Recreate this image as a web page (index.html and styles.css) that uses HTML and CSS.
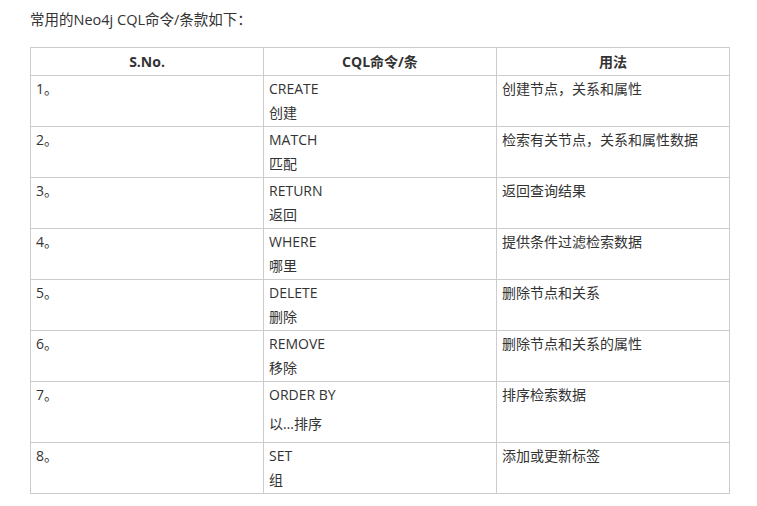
FILE: index.html
```html
<!DOCTYPE html>
<html lang="zh">
<head>
<meta charset="utf-8">
<link rel="stylesheet" href="styles.css">
</head>
<body>
<p class="intro">常用的Neo4j CQL命令/条款如下：</p>
<table class="cql">
  <thead>
    <tr><th>S.No.</th><th>CQL命令/条</th><th>用法</th></tr>
  </thead>
  <tbody>
    <tr><td>1。</td><td><div>CREATE</div><div>创建</div></td><td>创建节点，关系和属性</td></tr>
    <tr><td>2。</td><td><div>MATCH</div><div>匹配</div></td><td>检索有关节点，关系和属性数据</td></tr>
    <tr><td>3。</td><td><div>RETURN</div><div>返回</div></td><td>返回查询结果</td></tr>
    <tr><td>4。</td><td><div>WHERE</div><div>哪里</div></td><td>提供条件过滤检索数据</td></tr>
    <tr><td>5。</td><td><div>DELETE</div><div>删除</div></td><td>删除节点和关系</td></tr>
    <tr><td>6。</td><td><div>REMOVE</div><div>移除</div></td><td>删除节点和关系的属性</td></tr>
    <tr><td>7。</td><td><div>ORDER BY</div><div class="spaced">以…排序</div></td><td>排序检索数据</td></tr>
    <tr><td>8。</td><td><div>SET</div><div>组</div></td><td>添加或更新标签</td></tr>
  </tbody>
</table>
</body>
</html>
```
FILE: styles.css
```css
html, body {
  margin: 0;
  padding: 0;
  background: #fff;
}
body {
  font-family: "Open Sans", "Noto Sans CJK SC", sans-serif;
  font-size: 14px;
  color: #333;
  padding: 10px 0 0 30px;
}
.intro {
  margin: 0;
  line-height: 20px;
  height: 37px;
  font-size: 14.5px;
}
.cql {
  border-collapse: collapse;
  table-layout: fixed;
  width: 700px;
}
.cql th, .cql td {
  border: 1px solid #ccc;
  vertical-align: top;
  text-align: left;
  padding: 1px 5px;
  line-height: 24px;
  font-weight: normal;
  font-size: 14px;
}
.cql th {
  text-align: center;
  font-weight: bold;
  padding: 2px 5px 1px;
}
.cql td div {
  height: 24px;
}
.cql td .spaced {
  margin: 5px 0;
}
```
